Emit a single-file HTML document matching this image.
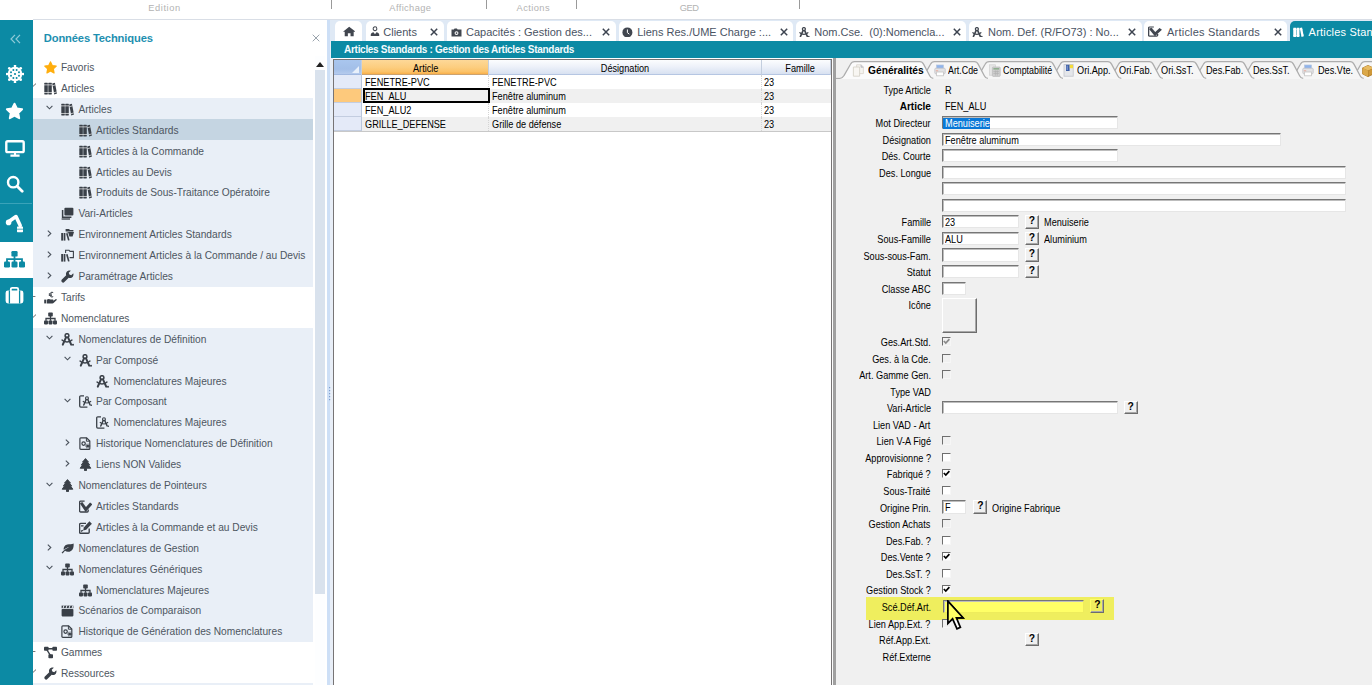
<!DOCTYPE html>
<html lang="fr"><head><meta charset="utf-8"><title>Articles Standards</title>
<style>
*{box-sizing:border-box;margin:0;padding:0}
html,body{width:1372px;height:685px;overflow:hidden;background:#fff}
body{position:relative;font-family:"Liberation Sans",sans-serif;font-size:10.2px;color:#434b55}
.abs{position:absolute}
.topbar{position:absolute;left:0;top:0;width:1372px;height:19px;background:#fff}
.topbar .lbl{position:absolute;top:1.7px;font-size:9.3px;color:#b3b3b3;line-height:12px;white-space:nowrap}
.topbar .sep{position:absolute;top:0;width:1px;height:9px;background:#9a9a9a}
.topline{position:absolute;left:33px;top:19px;width:1339px;height:1px;background:#d9dee6}
.strip{position:absolute;left:0;top:19.5px;width:32.6px;height:666px;background:#0c8aa4}
.strip .act{position:absolute;left:0;top:222.5px;width:33px;height:35.5px;background:#fff}
.strip .hl{position:absolute;left:0;top:183.5px;width:32.3px;height:1px;background:#3aa3b9}
.tree{position:absolute;left:32.6px;top:20px;width:294.4px;height:665px;background:#fff;overflow:hidden}
.tree h1{position:absolute;left:11.2px;top:11px;font-size:11.2px;font-weight:bold;color:#1d8fb0;line-height:14px;white-space:nowrap;letter-spacing:-0.15px}
.row{position:absolute;left:0.6px;width:280.2px;height:21.5px}
.row.c{background:#e9eff7}
.row.s{background:#c5d5e2}
.row .t{position:absolute;top:1.7px;line-height:20.9px;white-space:nowrap;color:#4d5661}
.row svg{position:absolute}
.split1{position:absolute;left:327.2px;top:20px;width:2.6px;height:665px;background:#cddff6}
.split2{position:absolute;left:329.8px;top:20px;width:3.7px;height:665px;background:#e8eef7}
.main{position:absolute;left:333px;top:20px;width:1039px;height:665px;background:#fff}
.tabbar{position:absolute;left:330.3px;top:20px;width:1042px;height:21px;background:#dfe9f5}
.tab{letter-spacing:0;position:absolute;top:1.2px;height:19.8px;background:#fff;border-radius:5px 5px 0 0;font-size:11px;color:#4a5363;line-height:19px;white-space:nowrap}
.tab.on{background:#0c8aa4;color:#fff}
.tab .tx{position:absolute;top:1.5px}
.tab .x{position:absolute;top:0.2px;font-size:11px;color:#3d4450}
.tab svg{position:absolute}
.title{position:absolute;left:331.3px;top:40.8px;width:1041px;height:17px;background:#0c8aa4;color:#f4fbfd;font-weight:bold;font-size:10px;letter-spacing:-0.3px;line-height:18px;padding-left:12.8px;white-space:nowrap}
.ms{letter-spacing:0;font-size:10.6px;color:#000;white-space:nowrap;line-height:13px}
.sx{display:inline-block;transform:scaleX(.865);transform-origin:left center;white-space:nowrap}
.sxr{display:inline-block;transform:scaleX(.865);transform-origin:right center;white-space:nowrap}
.sxc{display:inline-block;transform:scaleX(.865);transform-origin:center center;white-space:nowrap}
.grid{position:absolute;left:333px;top:59px;width:499.2px;height:627px;background:#fff;border:1px solid #777475}
.gh{position:absolute;top:0;height:15.4px;text-align:center;line-height:16px}
.gc{position:absolute;height:13.9px;line-height:13.9px;overflow:hidden}
.form{position:absolute;left:833.3px;top:58px;width:539px;height:627px;background:#f0f0f0;border-left:3px solid #a0a0a0}
.lab{position:absolute;right:441.6px;text-align:right;height:13px}
.val{position:absolute;height:13px}
.inp{position:absolute;height:13.2px;background:#fff;border-top:1px solid #767676;border-left:1px solid #767676;border-right:1px solid #e6e6e6;border-bottom:1px solid #e6e6e6;box-shadow:inset 1px 1px 0 #bdbdbd}
.inp .sx{position:absolute;left:2px;top:0px}
.qb{position:absolute;width:14px;height:13.6px;background:#f0f0f0;border-top:1px solid #fff;border-left:1px solid #fff;border-right:1.3px solid #6d6d6d;border-bottom:1.3px solid #6d6d6d;font-weight:bold;font-size:10.3px;line-height:10.8px;text-align:center;color:#000;box-shadow:inset -1px -1px 0 #a8a8a8}
.cb{position:absolute;width:9px;height:9.2px;background:#fff;border-top:1.5px solid #6e6e6e;border-left:1.5px solid #6e6e6e;border-right:1px solid #f6f6f6;border-bottom:1px solid #f6f6f6}
.cb.d{background:#f0f0f0}
.cb svg{position:absolute;left:0;top:0}
</style></head><body>

<div class="topbar">
<span class="lbl" style="left:148.3px;letter-spacing:.56px">Edition</span>
<span class="lbl" style="left:389.3px;letter-spacing:.38px">Affichage</span>
<span class="lbl" style="left:516.5px;letter-spacing:.44px">Actions</span>
<span class="lbl" style="left:679.8px;letter-spacing:-.5px">GED</span>
<span class="sep" style="left:331px"></span>
<span class="sep" style="left:486.3px"></span>
<span class="sep" style="left:576px"></span>
<span class="sep" style="left:799.2px"></span>
</div><div class="topline"></div>
<div class="strip" id="strip"><div class="act"></div><div class="hl"></div><svg style="position:absolute;left:10px;top:14px" width="11" height="10" viewBox="0 0 11 10"><path d="M5 0.8 L1 5 L5 9.2 M10 0.8 L6 5 L10 9.2" fill="none" stroke="#8fcad8" stroke-width="1.2"/></svg><svg style="position:absolute;left:5.8px;top:45.9px" width="18" height="18" viewBox="0 0 18 18"><circle cx="17.00" cy="9.00" r="1.35" fill="#fff"/><circle cx="14.66" cy="14.66" r="1.35" fill="#fff"/><circle cx="9.00" cy="17.00" r="1.35" fill="#fff"/><circle cx="3.34" cy="14.66" r="1.35" fill="#fff"/><circle cx="1.00" cy="9.00" r="1.35" fill="#fff"/><circle cx="3.34" cy="3.34" r="1.35" fill="#fff"/><circle cx="9.00" cy="1.00" r="1.35" fill="#fff"/><circle cx="14.66" cy="3.34" r="1.35" fill="#fff"/><circle cx="9" cy="9" r="7.3" fill="#fff"/><circle cx="12.97" cy="10.65" r="1.0" fill="#0c8aa4"/><circle cx="10.65" cy="12.97" r="1.0" fill="#0c8aa4"/><circle cx="7.35" cy="12.97" r="1.0" fill="#0c8aa4"/><circle cx="5.03" cy="10.65" r="1.0" fill="#0c8aa4"/><circle cx="5.03" cy="7.35" r="1.0" fill="#0c8aa4"/><circle cx="7.35" cy="5.03" r="1.0" fill="#0c8aa4"/><circle cx="10.65" cy="5.03" r="1.0" fill="#0c8aa4"/><circle cx="12.97" cy="7.35" r="1.0" fill="#0c8aa4"/><circle cx="9" cy="9" r="1.1" fill="#0c8aa4"/></svg><svg style="position:absolute;left:5.4px;top:82.6px" width="19" height="18" viewBox="0 0 13 13"><path d="M6.5 1.2 L8.2 4.7 L12 5.2 L9.2 7.9 L9.9 11.7 L6.5 9.9 L3.1 11.7 L3.8 7.9 L1 5.2 L4.8 4.7 Z" fill="#fff" stroke="#fff" stroke-width="1.4" stroke-linejoin="round"/></svg><svg style="position:absolute;left:5px;top:120px" width="20" height="17" viewBox="0 0 20 17"><rect x="1.3" y="1.3" width="17.4" height="10.8" rx="1.4" fill="none" stroke="#fff" stroke-width="2.4"/><path d="M10 12 V15 M5.4 15.6 H14.6" stroke="#fff" stroke-width="2.1"/></svg><svg style="position:absolute;left:5.6px;top:155.6px" width="18" height="18" viewBox="0 0 18 18"><circle cx="7.2" cy="7.2" r="5.2" fill="none" stroke="#fff" stroke-width="2.4"/><path d="M11.2 11.2 L16.2 16.2" stroke="#fff" stroke-width="2.8" stroke-linecap="round"/></svg><svg style="position:absolute;left:5.2px;top:194.4px" width="19" height="19" viewBox="0 0 19 19"><circle cx="3.6" cy="8.4" r="2.8" fill="#fff"/><path d="M4.6 7 L11 2.6 L15.2 11.6" fill="none" stroke="#fff" stroke-width="3.6" stroke-linejoin="round" stroke-linecap="round"/><rect x="12" y="12.6" width="6" height="5.6" rx=".6" fill="#fff"/><path d="M12 15.2 H18" stroke="#0c8aa4" stroke-width=".7"/></svg><svg style="position:absolute;left:4.3px;top:231.6px" width="21" height="16.5" viewBox="0 0 21 16.5"><g fill="#0c8aa4"><rect x="7.4" y="0" width="6.2" height="5.6" rx="1.2"/><rect x="0" y="10.6" width="6" height="5.9" rx="1.2"/><rect x="7.5" y="10.6" width="6" height="5.9" rx="1.2"/><rect x="15" y="10.6" width="6" height="5.9" rx="1.2"/></g><path d="M10.5 5 V11 M3 11 V8.2 H18 V11" fill="none" stroke="#0c8aa4" stroke-width="1.8"/></svg><svg style="position:absolute;left:5.3px;top:267.2px" width="19" height="17" viewBox="0 0 19 17"><rect x="0.6" y="3.6" width="17.8" height="12.8" rx="2.4" fill="#fff"/><path d="M5.8 4 V2.2 C5.8 1.4 6.4 0.9 7.2 0.9 H11.8 C12.6 0.9 13.2 1.4 13.2 2.2 V4" fill="none" stroke="#fff" stroke-width="1.8"/><path d="M4.4 3.6 V16.4 M14.6 3.6 V16.4" stroke="#0c8aa4" stroke-width="1.3"/></svg></div>
<div class="tree"><h1>Données Techniques</h1><svg class="abs" style="left:279.5px;top:14px" width="8" height="8" viewBox="0 0 8 8"><path d="M0.7 0.7 L7.3 7.3 M7.3 0.7 L0.7 7.3" stroke="#9aa3ad" stroke-width="1" fill="none"/></svg><svg class="abs" style="left:0px;top:63px" width="4" height="4" viewBox="0 0 4 4"><path d="M0 3.4 L3 0.6" stroke="#555" stroke-width=".9"/></svg><svg class="abs" style="left:0px;top:294px" width="4" height="4" viewBox="0 0 4 4"><path d="M0 3.4 L3 0.6" stroke="#555" stroke-width=".9"/></svg><svg class="abs" style="left:0px;top:649px" width="4" height="4" viewBox="0 0 4 4"><path d="M0 3.4 L3 0.6" stroke="#555" stroke-width=".9"/></svg><svg class="abs" style="left:0px;top:274.6px" width="3" height="3" viewBox="0 0 3 3"><path d="M0 1.5 H2.4" stroke="#666" stroke-width=".9"/></svg><svg class="abs" style="left:0px;top:630px" width="3" height="3" viewBox="0 0 3 3"><path d="M0 1.5 H2.4" stroke="#666" stroke-width=".9"/></svg>
<div class="row " style="top:36.40px">
<svg style="left:10.4px;top:4.7px" width="13" height="13" viewBox="0 0 13 13"><path d="M6.5 0.9 L8.2 4.6 L12.2 5.1 L9.3 7.9 L10 11.9 L6.5 10 L3 11.9 L3.7 7.9 L0.8 5.1 L4.8 4.6 Z" fill="#ffae0e" stroke="#ffae0e" stroke-width="1.3" stroke-linejoin="round"/></svg>
<span class="t" style="left:27.7px">Favoris</span>
</div>
<div class="row " style="top:57.30px">
<svg style="left:10.4px;top:4.7px" width="13" height="13" viewBox="0 0 13 13"><g fill="#3a4048"><rect x="0.3" y="0.8" width="3.5" height="11.6" rx=".4"/><rect x="4.3" y="0.8" width="3.5" height="11.6" rx=".4"/><path d="M8.2 1.4 L10.9 0.7 L13 11.6 L10.3 12.4 Z"/></g><g fill="#fff" opacity=".8"><rect x="0" y="2.5" width="8" height=".8"/><rect x="0" y="10" width="8" height=".8"/><path d="M8.3 3.3 L11.3 2.5 L11.5 3.3 L8.5 4.1 Z M9.8 10.2 L12.8 9.4 L13 10.2 L10 11 Z"/></g></svg>
<span class="t" style="left:27.7px">Articles</span>
</div>
<div class="row c" style="top:78.20px">
<svg style="left:13.1px;top:7.3px" width="7" height="5" viewBox="0 0 7 5"><path d="M0.6 0.8 L3.5 3.8 L6.4 0.8" fill="none" stroke="#4a525c" stroke-width="1.1"/></svg>
<svg style="left:27.9px;top:4.7px" width="13" height="13" viewBox="0 0 13 13"><g fill="#3a4048"><rect x="0.3" y="0.8" width="3.5" height="11.6" rx=".4"/><rect x="4.3" y="0.8" width="3.5" height="11.6" rx=".4"/><path d="M8.2 1.4 L10.9 0.7 L13 11.6 L10.3 12.4 Z"/></g><g fill="#fff" opacity=".8"><rect x="0" y="2.5" width="8" height=".8"/><rect x="0" y="10" width="8" height=".8"/><path d="M8.3 3.3 L11.3 2.5 L11.5 3.3 L8.5 4.1 Z M9.8 10.2 L12.8 9.4 L13 10.2 L10 11 Z"/></g></svg>
<span class="t" style="left:45.2px">Articles</span>
</div>
<div class="row s" style="top:99.10px">
<svg style="left:45.4px;top:4.7px" width="13" height="13" viewBox="0 0 13 13"><g fill="#3a4048"><rect x="0.3" y="0.8" width="3.5" height="11.6" rx=".4"/><rect x="4.3" y="0.8" width="3.5" height="11.6" rx=".4"/><path d="M8.2 1.4 L10.9 0.7 L13 11.6 L10.3 12.4 Z"/></g><g fill="#fff" opacity=".8"><rect x="0" y="2.5" width="8" height=".8"/><rect x="0" y="10" width="8" height=".8"/><path d="M8.3 3.3 L11.3 2.5 L11.5 3.3 L8.5 4.1 Z M9.8 10.2 L12.8 9.4 L13 10.2 L10 11 Z"/></g></svg>
<span class="t" style="left:62.7px">Articles Standards</span>
</div>
<div class="row c" style="top:120.00px">
<svg style="left:45.4px;top:4.7px" width="13" height="13" viewBox="0 0 13 13"><g fill="#3a4048"><rect x="0.3" y="0.8" width="3.5" height="11.6" rx=".4"/><rect x="4.3" y="0.8" width="3.5" height="11.6" rx=".4"/><path d="M8.2 1.4 L10.9 0.7 L13 11.6 L10.3 12.4 Z"/></g><g fill="#fff" opacity=".8"><rect x="0" y="2.5" width="8" height=".8"/><rect x="0" y="10" width="8" height=".8"/><path d="M8.3 3.3 L11.3 2.5 L11.5 3.3 L8.5 4.1 Z M9.8 10.2 L12.8 9.4 L13 10.2 L10 11 Z"/></g></svg>
<span class="t" style="left:62.7px">Articles à la Commande</span>
</div>
<div class="row c" style="top:140.90px">
<svg style="left:45.4px;top:4.7px" width="13" height="13" viewBox="0 0 13 13"><g fill="#3a4048"><rect x="0.3" y="0.8" width="3.5" height="11.6" rx=".4"/><rect x="4.3" y="0.8" width="3.5" height="11.6" rx=".4"/><path d="M8.2 1.4 L10.9 0.7 L13 11.6 L10.3 12.4 Z"/></g><g fill="#fff" opacity=".8"><rect x="0" y="2.5" width="8" height=".8"/><rect x="0" y="10" width="8" height=".8"/><path d="M8.3 3.3 L11.3 2.5 L11.5 3.3 L8.5 4.1 Z M9.8 10.2 L12.8 9.4 L13 10.2 L10 11 Z"/></g></svg>
<span class="t" style="left:62.7px">Articles au Devis</span>
</div>
<div class="row c" style="top:161.80px">
<svg style="left:45.4px;top:4.7px" width="13" height="13" viewBox="0 0 13 13"><g fill="#3a4048"><rect x="0.3" y="0.8" width="3.5" height="11.6" rx=".4"/><rect x="4.3" y="0.8" width="3.5" height="11.6" rx=".4"/><path d="M8.2 1.4 L10.9 0.7 L13 11.6 L10.3 12.4 Z"/></g><g fill="#fff" opacity=".8"><rect x="0" y="2.5" width="8" height=".8"/><rect x="0" y="10" width="8" height=".8"/><path d="M8.3 3.3 L11.3 2.5 L11.5 3.3 L8.5 4.1 Z M9.8 10.2 L12.8 9.4 L13 10.2 L10 11 Z"/></g></svg>
<span class="t" style="left:62.7px">Produits de Sous-Traitance Opératoire</span>
</div>
<div class="row c" style="top:182.70px">
<svg style="left:27.9px;top:4.7px" width="13" height="13" viewBox="0 0 13 13"><rect x="3.4" y="0.8" width="9" height="7.6" rx="1" fill="#3a4048"/><path d="M1.6 3 V10.2 H10.4" fill="none" stroke="#3a4048" stroke-width="1.5"/><path d="M0.6 12 H9" fill="none" stroke="#3a4048" stroke-width="1.3"/></svg>
<span class="t" style="left:45.2px">Vari-Articles</span>
</div>
<div class="row c" style="top:203.60px">
<svg style="left:14.1px;top:6.6px" width="5" height="7" viewBox="0 0 5 7"><path d="M0.8 0.6 L3.8 3.5 L0.8 6.4" fill="none" stroke="#4a525c" stroke-width="1.1"/></svg>
<svg style="left:27.9px;top:4.7px" width="13" height="13" viewBox="0 0 13 13"><g fill="#3a4048"><rect x="0.2" y="5" width="1.8" height="7.6"/><rect x="2.6" y="5" width="1.8" height="7.6"/><path d="M5 5.4 L6.6 5 L8.6 12.2 L7 12.6 Z"/><path d="M4.6 1 H8 L9 2 H12.4 V3.4 H4.6 Z"/><path d="M5.6 4 H13 L11.6 8.6 H8.4 L7.2 4.6 H5.6 Z"/></g></svg>
<span class="t" style="left:45.2px">Environnement Articles Standards</span>
</div>
<div class="row c" style="top:224.50px">
<svg style="left:14.1px;top:6.6px" width="5" height="7" viewBox="0 0 5 7"><path d="M0.8 0.6 L3.8 3.5 L0.8 6.4" fill="none" stroke="#4a525c" stroke-width="1.1"/></svg>
<svg style="left:27.9px;top:4.7px" width="13" height="13" viewBox="0 0 13 13"><g fill="#3a4048"><rect x="0.2" y="5" width="1.8" height="7.6"/><rect x="2.6" y="5" width="1.8" height="7.6"/><path d="M5 5.4 L6.6 5 L8.6 12.2 L7 12.6 Z"/></g><path d="M4.6 4 V1.2 H8 L9 2.4 H12.4 V8.6 H8.6" fill="none" stroke="#3a4048" stroke-width="1.1"/></svg>
<span class="t" style="left:45.2px">Environnement Articles à la Commande / au Devis</span>
</div>
<div class="row c" style="top:245.40px">
<svg style="left:14.1px;top:6.6px" width="5" height="7" viewBox="0 0 5 7"><path d="M0.8 0.6 L3.8 3.5 L0.8 6.4" fill="none" stroke="#4a525c" stroke-width="1.1"/></svg>
<svg style="left:27.9px;top:4.7px" width="13" height="13" viewBox="0 0 13 13"><path d="M12.3 3.2 L10.2 5.3 L8.4 4.6 L7.7 2.8 L9.8 0.7 C8.2 0.2 6.5 0.7 5.6 2 C4.9 3 4.8 4.2 5.2 5.3 L0.9 9.6 C0.2 10.3 0.2 11.4 0.9 12.1 C1.6 12.8 2.7 12.8 3.4 12.1 L7.7 7.8 C8.8 8.2 10 8.1 11 7.4 C12.3 6.5 12.8 4.8 12.3 3.2 Z" fill="#3a4048"/></svg>
<span class="t" style="left:45.2px">Paramétrage Articles</span>
</div>
<div class="row " style="top:266.30px">
<svg style="left:10.4px;top:4.7px" width="13" height="13" viewBox="0 0 13 13"><path d="M0.2 8.6 H2.2 V12.4 H0.2 Z" fill="#3a4048"/><path d="M2.8 8.8 C4 7.8 5.4 7.8 6.6 8.6 H8.8 C9.6 8.6 9.6 9.8 8.8 9.8 H6.4 H9.4 L11.6 8.2 C12.4 7.7 13.2 8.6 12.5 9.3 L9.8 11.8 C9.4 12.2 9 12.4 8.4 12.4 H2.8 Z" fill="#3a4048"/><path d="M9.2 1.6 C7.6 0.6 5.8 1.6 5.8 3.6 C5.8 5.6 7.6 6.6 9.2 5.6 M4.8 3 H8 M4.8 4.3 H8" fill="none" stroke="#3a4048" stroke-width="1"/></svg>
<span class="t" style="left:27.7px">Tarifs</span>
</div>
<div class="row " style="top:287.20px">
<svg style="left:10.4px;top:4.7px" width="13" height="13" viewBox="0 0 13 13"><g fill="#3a4048"><rect x="4.2" y="0.6" width="4.6" height="4" rx=".8"/><rect x="0" y="8.4" width="4" height="4" rx=".8"/><rect x="4.5" y="8.4" width="4" height="4" rx=".8"/><rect x="9" y="8.4" width="4" height="4" rx=".8"/></g><path d="M6.5 4 V8.8 M2 8.8 V6.5 H11 V8.8" fill="none" stroke="#3a4048" stroke-width="1.3"/></svg>
<span class="t" style="left:27.7px">Nomenclatures</span>
</div>
<div class="row c" style="top:308.10px">
<svg style="left:13.1px;top:7.3px" width="7" height="5" viewBox="0 0 7 5"><path d="M0.6 0.8 L3.5 3.8 L6.4 0.8" fill="none" stroke="#4a525c" stroke-width="1.1"/></svg>
<svg style="left:27.9px;top:4.7px" width="13" height="13" viewBox="0 0 13 13"><circle cx="6" cy="2.6" r="1.9" fill="none" stroke="#3a4048" stroke-width="1.5"/><path d="M5 4.4 L1.8 11.6 M7 4.4 L10.2 11.6" fill="none" stroke="#3a4048" stroke-width="2" stroke-linecap="round"/><path d="M0.6 6.6 C3.2 9.8 8.8 9.8 11.4 6.6" fill="none" stroke="#3a4048" stroke-width="1.5"/><circle cx="12" cy="11.8" r="1" fill="#3a4048"/></svg>
<span class="t" style="left:45.2px">Nomenclatures de Définition</span>
</div>
<div class="row c" style="top:329.00px">
<svg style="left:30.6px;top:7.3px" width="7" height="5" viewBox="0 0 7 5"><path d="M0.6 0.8 L3.5 3.8 L6.4 0.8" fill="none" stroke="#4a525c" stroke-width="1.1"/></svg>
<svg style="left:45.4px;top:4.7px" width="13" height="13" viewBox="0 0 13 13"><circle cx="6" cy="2.6" r="1.9" fill="none" stroke="#3a4048" stroke-width="1.5"/><path d="M5 4.4 L1.8 11.6 M7 4.4 L10.2 11.6" fill="none" stroke="#3a4048" stroke-width="2" stroke-linecap="round"/><path d="M0.6 6.6 C3.2 9.8 8.8 9.8 11.4 6.6" fill="none" stroke="#3a4048" stroke-width="1.5"/><circle cx="12" cy="11.8" r="1" fill="#3a4048"/></svg>
<span class="t" style="left:62.7px">Par Composé</span>
</div>
<div class="row c" style="top:349.90px">
<svg style="left:62.9px;top:4.7px" width="13" height="13" viewBox="0 0 13 13"><circle cx="6" cy="2.6" r="1.9" fill="none" stroke="#3a4048" stroke-width="1.5"/><path d="M5 4.4 L1.8 11.6 M7 4.4 L10.2 11.6" fill="none" stroke="#3a4048" stroke-width="2" stroke-linecap="round"/><path d="M0.6 6.6 C3.2 9.8 8.8 9.8 11.4 6.6" fill="none" stroke="#3a4048" stroke-width="1.5"/><circle cx="12" cy="11.8" r="1" fill="#3a4048"/></svg>
<span class="t" style="left:80.2px">Nomenclatures Majeures</span>
</div>
<div class="row c" style="top:370.80px">
<svg style="left:30.6px;top:7.3px" width="7" height="5" viewBox="0 0 7 5"><path d="M0.6 0.8 L3.5 3.8 L6.4 0.8" fill="none" stroke="#4a525c" stroke-width="1.1"/></svg>
<svg style="left:45.4px;top:4.7px" width="13" height="13" viewBox="0 0 13 13"><path d="M5 0.8 H1.8 C1.1 0.8 0.7 1.2 0.7 1.9 V11 C0.7 11.7 1.1 12.1 1.8 12.1 H8.4" fill="none" stroke="#3a4048" stroke-width="1.3"/><g transform="translate(3.4,1.2) scale(.76)"><circle cx="6" cy="2.6" r="1.9" fill="none" stroke="#3a4048" stroke-width="1.5"/><path d="M5 4.4 L1.8 11.6 M7 4.4 L10.2 11.6" fill="none" stroke="#3a4048" stroke-width="2" stroke-linecap="round"/><path d="M0.6 6.6 C3.2 9.8 8.8 9.8 11.4 6.6" fill="none" stroke="#3a4048" stroke-width="1.5"/><circle cx="12" cy="11.8" r="1" fill="#3a4048"/></g></svg>
<span class="t" style="left:62.7px">Par Composant</span>
</div>
<div class="row c" style="top:391.70px">
<svg style="left:62.9px;top:4.7px" width="13" height="13" viewBox="0 0 13 13"><path d="M5 0.8 H1.8 C1.1 0.8 0.7 1.2 0.7 1.9 V11 C0.7 11.7 1.1 12.1 1.8 12.1 H8.4" fill="none" stroke="#3a4048" stroke-width="1.3"/><g transform="translate(3.4,1.2) scale(.76)"><circle cx="6" cy="2.6" r="1.9" fill="none" stroke="#3a4048" stroke-width="1.5"/><path d="M5 4.4 L1.8 11.6 M7 4.4 L10.2 11.6" fill="none" stroke="#3a4048" stroke-width="2" stroke-linecap="round"/><path d="M0.6 6.6 C3.2 9.8 8.8 9.8 11.4 6.6" fill="none" stroke="#3a4048" stroke-width="1.5"/><circle cx="12" cy="11.8" r="1" fill="#3a4048"/></g></svg>
<span class="t" style="left:80.2px">Nomenclatures Majeures</span>
</div>
<div class="row c" style="top:412.60px">
<svg style="left:31.6px;top:6.6px" width="5" height="7" viewBox="0 0 5 7"><path d="M0.8 0.6 L3.8 3.5 L0.8 6.4" fill="none" stroke="#4a525c" stroke-width="1.1"/></svg>
<svg style="left:45.4px;top:4.7px" width="13" height="13" viewBox="0 0 13 13"><path d="M1.8 0.8 H7.6 L10.8 4 V11.4 C10.8 11.9 10.4 12.3 9.9 12.3 H1.8 C1.3 12.3 0.9 11.9 0.9 11.4 V1.7 C0.9 1.2 1.3 0.8 1.8 0.8 Z" fill="none" stroke="#3a4048" stroke-width="1.2"/><path d="M7.4 0.8 V4.2 H10.8" fill="none" stroke="#3a4048" stroke-width="1"/><circle cx="4.6" cy="6.6" r="1.7" fill="none" stroke="#3a4048" stroke-width="1.2"/><circle cx="8.6" cy="9" r="1.5" fill="#3a4048"/><circle cx="8.6" cy="9" r="2.1" fill="none" stroke="#3a4048" stroke-width=".8" stroke-dasharray="1 .8"/></svg>
<span class="t" style="left:62.7px">Historique Nomenclatures de Définition</span>
</div>
<div class="row c" style="top:433.50px">
<svg style="left:31.6px;top:6.6px" width="5" height="7" viewBox="0 0 5 7"><path d="M0.8 0.6 L3.8 3.5 L0.8 6.4" fill="none" stroke="#4a525c" stroke-width="1.1"/></svg>
<svg style="left:45.4px;top:4.7px" width="13" height="13" viewBox="0 0 13 13"><path d="M6.5 0.6 L9.4 4 H8.4 L10.6 6.8 H9.4 L11.8 10.2 H7.5 V12.6 H5.5 V10.2 H1.2 L3.6 6.8 H2.4 L4.6 4 H3.6 Z" fill="#3a4048" stroke="#3a4048" stroke-width="1" stroke-linejoin="round"/></svg>
<span class="t" style="left:62.7px">Liens NON Valides</span>
</div>
<div class="row c" style="top:454.40px">
<svg style="left:13.1px;top:7.3px" width="7" height="5" viewBox="0 0 7 5"><path d="M0.6 0.8 L3.5 3.8 L6.4 0.8" fill="none" stroke="#4a525c" stroke-width="1.1"/></svg>
<svg style="left:27.9px;top:4.7px" width="13" height="13" viewBox="0 0 13 13"><path d="M6.5 0.6 L9.4 4 H8.4 L10.6 6.8 H9.4 L11.8 10.2 H7.5 V12.6 H5.5 V10.2 H1.2 L3.6 6.8 H2.4 L4.6 4 H3.6 Z" fill="#3a4048" stroke="#3a4048" stroke-width="1" stroke-linejoin="round"/></svg>
<span class="t" style="left:45.2px">Nomenclatures de Pointeurs</span>
</div>
<div class="row c" style="top:475.30px">
<svg style="left:45.4px;top:4.7px" width="13" height="13" viewBox="0 0 13 13"><path d="M5.6 1.2 H1.6 C1 1.2 0.6 1.6 0.6 2.2 V11 C0.6 11.6 1 12 1.6 12 H8.2 C8.8 12 9.2 11.6 9.2 11 V9.4" fill="none" stroke="#3a4048" stroke-width="1.3"/><path d="M2.2 2.6 L6.8 9.6 L12.2 3.4" fill="none" stroke="#3a4048" stroke-width="3" stroke-linejoin="miter"/><path d="M3.4 2.2 L6.2 5.6" fill="none" stroke="#fff" stroke-width=".7" opacity=".55"/></svg>
<span class="t" style="left:62.7px">Articles Standards</span>
</div>
<div class="row c" style="top:496.20px">
<svg style="left:45.4px;top:4.7px" width="13" height="13" viewBox="0 0 13 13"><path d="M7 2.4 H1.6 C1 2.4 0.6 2.8 0.6 3.4 V11.2 C0.6 11.8 1 12.2 1.6 12.2 H9.2 C9.8 12.2 10.2 11.8 10.2 11.2 V7.6" fill="none" stroke="#3a4048" stroke-width="1.4"/><path d="M10.4 0.2 L12.9 2.7 L7.2 8.8 L4.2 9.4 L4.8 6.4 Z" fill="#3a4048"/><path d="M2 4.8 H4.6 M2 10.4 L3.8 9.2" stroke="#3a4048" stroke-width="1.3"/></svg>
<span class="t" style="left:62.7px">Articles à la Commande et au Devis</span>
</div>
<div class="row c" style="top:517.10px">
<svg style="left:14.1px;top:6.6px" width="5" height="7" viewBox="0 0 5 7"><path d="M0.8 0.6 L3.8 3.5 L0.8 6.4" fill="none" stroke="#4a525c" stroke-width="1.1"/></svg>
<svg style="left:27.9px;top:4.7px" width="13" height="13" viewBox="0 0 13 13"><path d="M12.6 1.4 C13 5.6 11.6 9.6 7 9.8 C5.8 9.8 4.8 9.4 4 8.8 L1.6 11.6 L0.6 10.8 C2.6 8 5 6.2 8.4 5.2 C5.8 5.4 4 6.6 2.8 8 C2.2 5.6 3.4 3 6.2 2.4 C8.6 1.9 10.8 2.6 12.6 1.4 Z" fill="#3a4048"/></svg>
<span class="t" style="left:45.2px">Nomenclatures de Gestion</span>
</div>
<div class="row c" style="top:538.00px">
<svg style="left:13.1px;top:7.3px" width="7" height="5" viewBox="0 0 7 5"><path d="M0.6 0.8 L3.5 3.8 L6.4 0.8" fill="none" stroke="#4a525c" stroke-width="1.1"/></svg>
<svg style="left:27.9px;top:4.7px" width="13" height="13" viewBox="0 0 13 13"><g fill="#3a4048"><rect x="4.2" y="0.6" width="4.6" height="4" rx=".8"/><rect x="0" y="8.4" width="4" height="4" rx=".8"/><rect x="4.5" y="8.4" width="4" height="4" rx=".8"/><rect x="9" y="8.4" width="4" height="4" rx=".8"/></g><path d="M6.5 4 V8.8 M2 8.8 V6.5 H11 V8.8" fill="none" stroke="#3a4048" stroke-width="1.3"/></svg>
<span class="t" style="left:45.2px">Nomenclatures Génériques</span>
</div>
<div class="row c" style="top:558.90px">
<svg style="left:45.4px;top:4.7px" width="13" height="13" viewBox="0 0 13 13"><g fill="#3a4048"><rect x="4.2" y="0.6" width="4.6" height="4" rx=".8"/><rect x="0" y="8.4" width="4" height="4" rx=".8"/><rect x="4.5" y="8.4" width="4" height="4" rx=".8"/><rect x="9" y="8.4" width="4" height="4" rx=".8"/></g><path d="M6.5 4 V8.8 M2 8.8 V6.5 H11 V8.8" fill="none" stroke="#3a4048" stroke-width="1.3"/></svg>
<span class="t" style="left:62.7px">Nomenclatures Majeures</span>
</div>
<div class="row c" style="top:579.80px">
<svg style="left:27.9px;top:4.7px" width="13" height="13" viewBox="0 0 13 13"><rect x="0.6" y="5" width="11.8" height="7.4" rx=".8" fill="#3a4048"/><path d="M0.6 1.6 H12.4 V4.2 H0.6 Z" fill="#3a4048"/><path d="M3 1.4 L2 4.4 M6 1.4 L5 4.4 M9 1.4 L8 4.4 M12 1.4 L11 4.4" stroke="#e9eff7" stroke-width="1"/></svg>
<span class="t" style="left:45.2px">Scénarios de Comparaison</span>
</div>
<div class="row c" style="top:600.70px">
<svg style="left:27.9px;top:4.7px" width="13" height="13" viewBox="0 0 13 13"><path d="M1.8 0.8 H7.6 L10.8 4 V11.4 C10.8 11.9 10.4 12.3 9.9 12.3 H1.8 C1.3 12.3 0.9 11.9 0.9 11.4 V1.7 C0.9 1.2 1.3 0.8 1.8 0.8 Z" fill="none" stroke="#3a4048" stroke-width="1.2"/><path d="M7.4 0.8 V4.2 H10.8" fill="none" stroke="#3a4048" stroke-width="1"/><circle cx="4.6" cy="6.6" r="1.7" fill="none" stroke="#3a4048" stroke-width="1.2"/><circle cx="8.6" cy="9" r="1.5" fill="#3a4048"/><circle cx="8.6" cy="9" r="2.1" fill="none" stroke="#3a4048" stroke-width=".8" stroke-dasharray="1 .8"/></svg>
<span class="t" style="left:45.2px">Historique de Génération des Nomenclatures</span>
</div>
<div class="row " style="top:621.60px">
<svg style="left:10.4px;top:4.7px" width="13" height="13" viewBox="0 0 13 13"><g fill="#3a4048"><rect x="0" y="0.8" width="4.6" height="4" rx=".8"/><rect x="8.4" y="0.8" width="4.6" height="4" rx=".8"/><rect x="4.4" y="8.2" width="4.6" height="4" rx=".8"/></g><path d="M4 2.8 H9 M3 4 L6.4 9.4" fill="none" stroke="#3a4048" stroke-width="1.4"/></svg>
<span class="t" style="left:27.7px">Gammes</span>
</div>
<div class="row " style="top:642.50px">
<svg style="left:10.4px;top:4.7px" width="13" height="13" viewBox="0 0 13 13"><path d="M12.3 3.2 L10.2 5.3 L8.4 4.6 L7.7 2.8 L9.8 0.7 C8.2 0.2 6.5 0.7 5.6 2 C4.9 3 4.8 4.2 5.2 5.3 L0.9 9.6 C0.2 10.3 0.2 11.4 0.9 12.1 C1.6 12.8 2.7 12.8 3.4 12.1 L7.7 7.8 C8.8 8.2 10 8.1 11 7.4 C12.3 6.5 12.8 4.8 12.3 3.2 Z" fill="#3a4048"/></svg>
<span class="t" style="left:27.7px">Ressources</span>
</div>
<div class="row c" style="top:663.40px">
</div>
<div class="abs" style="left:282.6px;top:36px;width:9.4px;height:650px;background:#fdfeff"></div>
<div class="abs" style="left:282.6px;top:50px;width:9.4px;height:524px;background:#d9e2ed"></div>
<svg class="abs" style="left:283.3px;top:41.5px" width="8" height="5" viewBox="0 0 8 5"><path d="M0 5 L4 0 L8 5 Z" fill="#222"/></svg>
</div>
<div class="split1"></div><div class="split2"></div>
<svg class="abs" style="left:328.6px;top:387px" width="2" height="16" viewBox="0 0 2 16"><g fill="#7f9fd0"><rect y="0" width="1.2" height="1.2"/><rect y="3" width="1.2" height="1.2"/><rect y="6" width="1.2" height="1.2"/><rect y="9" width="1.2" height="1.2"/><rect y="12" width="1.2" height="1.2"/></g></svg>
<div class="tabbar">
<div class="tab" style="left:4.9px;width:26.4px">
<svg style="left:7.5px;top:4.6px" width="12.4" height="11.2" viewBox="0 0 13 13" preserveAspectRatio="none"><path d="M6.5 0.8 L13 6.6 H11.2 V12 H7.9 V8.4 H5.1 V12 H1.8 V6.6 H0 Z" fill="#41464f"/></svg>
</div>
<div class="tab" style="left:36.2px;width:77.5px">
<svg style="left:3.3px;top:5.2px" width="10" height="10.6" viewBox="0 0 13 13" preserveAspectRatio="none"><circle cx="6.5" cy="3.4" r="2.4" fill="none" stroke="#41464f" stroke-width="1.3"/><path d="M1 12.4 V10.6 C1 9 3 8 4.6 7.8 L6.5 10 L8.4 7.8 C10 8 12 9 12 10.6 V12.4 Z" fill="#41464f"/></svg>
<span class="tx" style="left:16.8px;white-space:pre;letter-spacing:0px">Clients</span>
<svg style="left:63.9px;top:6.6px" width="8" height="8" viewBox="0 0 8 8"><path d="M0.8 0.8 L7.2 7.2 M7.2 0.8 L0.8 7.2" stroke="#3d4450" stroke-width="1.5" fill="none"/></svg>
</div>
<div class="tab" style="left:116.7px;width:168.7px">
<svg style="left:3.6px;top:5.6px" width="11" height="10.6" viewBox="0 0 13 13" preserveAspectRatio="none"><path d="M0.6 3 H3.4 L4.2 1.8 H7 L7.8 3 H12.4 V11.8 H0.6 Z" fill="#41464f"/><circle cx="6.5" cy="7.4" r="2.3" fill="#fff"/><circle cx="6.5" cy="7.4" r="1.1" fill="#41464f"/></svg>
<span class="tx" style="left:19.0px;white-space:pre;letter-spacing:0px">Capacités : Gestion des...</span>
<svg style="left:155.1px;top:6.6px" width="8" height="8" viewBox="0 0 8 8"><path d="M0.8 0.8 L7.2 7.2 M7.2 0.8 L0.8 7.2" stroke="#3d4450" stroke-width="1.5" fill="none"/></svg>
</div>
<div class="tab" style="left:288.3px;width:174.9px">
<svg style="left:3.3px;top:5.4px" width="10.8" height="10.8" viewBox="0 0 13 13" preserveAspectRatio="none"><circle cx="6.5" cy="6.5" r="6" fill="#41464f"/><path d="M6.5 3 V6.8 L8.8 8.6" fill="none" stroke="#fff" stroke-width="1.2"/></svg>
<span class="tx" style="left:18.6px;white-space:pre;letter-spacing:0px">Liens Res./UME Charge :...</span>
<svg style="left:161.3px;top:6.6px" width="8" height="8" viewBox="0 0 8 8"><path d="M0.8 0.8 L7.2 7.2 M7.2 0.8 L0.8 7.2" stroke="#3d4450" stroke-width="1.5" fill="none"/></svg>
</div>
<div class="tab" style="left:465.4px;width:170.8px">
<svg style="left:3.4px;top:5.4px" width="10.6" height="10.6" viewBox="0 0 13 13" preserveAspectRatio="none"><circle cx="6" cy="2.6" r="1.9" fill="none" stroke="#41464f" stroke-width="1.5"/><path d="M5 4.4 L1.8 11.6 M7 4.4 L10.2 11.6" fill="none" stroke="#41464f" stroke-width="2" stroke-linecap="round"/><path d="M0.6 6.6 C3.2 9.8 8.8 9.8 11.4 6.6" fill="none" stroke="#41464f" stroke-width="1.5"/><circle cx="12" cy="11.8" r="1" fill="#41464f"/></svg>
<span class="tx" style="left:18.6px;white-space:pre;letter-spacing:0px">Nom.Cse.  (0):Nomencla...</span>
<svg style="left:157.2px;top:6.6px" width="8" height="8" viewBox="0 0 8 8"><path d="M0.8 0.8 L7.2 7.2 M7.2 0.8 L0.8 7.2" stroke="#3d4450" stroke-width="1.5" fill="none"/></svg>
</div>
<div class="tab" style="left:638.9px;width:172.8px">
<svg style="left:3.2px;top:5.4px" width="10.6" height="10.6" viewBox="0 0 13 13" preserveAspectRatio="none"><circle cx="6" cy="2.6" r="1.9" fill="none" stroke="#41464f" stroke-width="1.5"/><path d="M5 4.4 L1.8 11.6 M7 4.4 L10.2 11.6" fill="none" stroke="#41464f" stroke-width="2" stroke-linecap="round"/><path d="M0.6 6.6 C3.2 9.8 8.8 9.8 11.4 6.6" fill="none" stroke="#41464f" stroke-width="1.5"/><circle cx="12" cy="11.8" r="1" fill="#41464f"/></svg>
<span class="tx" style="left:18.8px;white-space:pre;letter-spacing:0px">Nom. Def. (R/FO73) : No...</span>
<svg style="left:159.2px;top:6.6px" width="8" height="8" viewBox="0 0 8 8"><path d="M0.8 0.8 L7.2 7.2 M7.2 0.8 L0.8 7.2" stroke="#3d4450" stroke-width="1.5" fill="none"/></svg>
</div>
<div class="tab" style="left:813.9px;width:143.2px">
<svg style="left:3.8px;top:5.2px" width="13.6" height="11" viewBox="0 0 13 13" preserveAspectRatio="none"><path d="M5.6 1.2 H1.6 C1 1.2 0.6 1.6 0.6 2.2 V11 C0.6 11.6 1 12 1.6 12 H8.2 C8.8 12 9.2 11.6 9.2 11 V9.4" fill="none" stroke="#41464f" stroke-width="1.3"/><path d="M2.2 2.6 L6.8 9.6 L12.2 3.4" fill="none" stroke="#41464f" stroke-width="3" stroke-linejoin="miter"/><path d="M3.4 2.2 L6.2 5.6" fill="none" stroke="#fff" stroke-width=".7" opacity=".55"/></svg>
<span class="tx" style="left:22.9px;white-space:pre;letter-spacing:0.2px">Articles Standards</span>
<svg style="left:129.6px;top:6.6px" width="8" height="8" viewBox="0 0 8 8"><path d="M0.8 0.8 L7.2 7.2 M7.2 0.8 L0.8 7.2" stroke="#3d4450" stroke-width="1.5" fill="none"/></svg>
</div>
<div class="tab on" style="left:959.3px;width:90.4px">
<svg style="left:3.6px;top:5.4px" width="10.8" height="10.4" viewBox="0 0 13 13" preserveAspectRatio="none"><g fill="#fff"><rect x="0.3" y="0.8" width="3.5" height="11.6" rx=".4"/><rect x="4.3" y="0.8" width="3.5" height="11.6" rx=".4"/><path d="M8.2 1.4 L10.9 0.7 L13 11.6 L10.3 12.4 Z"/></g><g fill="#fff" opacity=".8"><rect x="0" y="2.5" width="8" height=".8"/><rect x="0" y="10" width="8" height=".8"/><path d="M8.3 3.3 L11.3 2.5 L11.5 3.3 L8.5 4.1 Z M9.8 10.2 L12.8 9.4 L13 10.2 L10 11 Z"/></g></svg>
<span class="tx" style="left:19.0px;white-space:pre;letter-spacing:0.2px">Articles Standards</span>
</div>
</div>
<div class="title">Articles Standards : Gestion des Articles Standards</div>
<div class="grid ms">
<div class="gh" style="left:0.0px;width:28.3px;background:linear-gradient(#a9c6ee,#a3bfe8 60%,#b9cdee);border-right:1px solid #c3cede;box-shadow:inset 0 -1px 0 rgba(120,150,200,.35)">
<svg class="abs" style="left:18px;top:5.5px" width="7" height="7" viewBox="0 0 7 7"><path d="M7 0 L7 7 L0 7 Z" fill="#e8f0fb"/></svg>
</div>
<div class="gh" style="left:28.3px;width:127.0px;background:linear-gradient(#fdd898 0%,#fccd7e 50%,#fbc268 78%,#f8a63a 100%);border-right:1px solid #c3cede;box-shadow:inset 0 -1px 0 rgba(120,150,200,.35)">
<span class="sxc" style="">Article</span>
</div>
<div class="gh" style="left:155.3px;width:272.5px;background:linear-gradient(#fcfdfe,#edf1f9 45%,#d5dff0);border-right:1px solid #c3cede;box-shadow:inset 0 -1px 0 rgba(120,150,200,.35)">
<span class="sxc" style="">Désignation</span>
</div>
<div class="gh" style="left:427.8px;width:69.5px;background:linear-gradient(#fcfdfe,#edf1f9 45%,#d5dff0);border-right:1px solid #c3cede;box-shadow:inset 0 -1px 0 rgba(120,150,200,.35)">
<span class="sxc" style="margin-left:8px">Famille</span>
</div>
<div class="gc" style="left:0;top:15.4px;width:28.3px;height:13.2px;background:#e4eaf8;border-right:1px solid #b9c6dc;border-bottom:1px solid #c3cde0"></div>
<div class="gc" style="left:28.3px;top:15.4px;width:127.0px;height:13.2px;background:#fff;border-right:1px dotted #d4d4d4;line-height:14.6px"><span class="sx" style="margin-left:2.6px">FENETRE-PVC</span></div>
<div class="gc" style="left:155.3px;top:15.4px;width:272.5px;height:13.2px;background:#fff;border-right:1px dotted #d4d4d4;line-height:14.6px"><span class="sx" style="margin-left:2.6px">FENETRE-PVC</span></div>
<div class="gc" style="left:427.8px;top:15.4px;width:69.5px;height:13.2px;background:#fff;border-right:1px dotted transparent;line-height:14.6px"><span class="sx" style="margin-left:2.6px">23</span></div>
<div class="gc" style="left:0;top:28.6px;width:28.3px;height:14.5px;background:#fdc97c;border-right:1px solid #b9c6dc;border-bottom:1px solid #c3cde0"></div>
<div class="gc" style="left:28.3px;top:28.6px;width:127.0px;height:14.5px;background:#f0f0f0;border-right:1px dotted #d4d4d4;line-height:15.9px"><span class="sx" style="margin-left:2.6px">FEN_ALU</span></div>
<div class="gc" style="left:155.3px;top:28.6px;width:272.5px;height:14.5px;background:#f0f0f0;border-right:1px dotted #d4d4d4;line-height:15.9px"><span class="sx" style="margin-left:2.6px">Fenêtre aluminum</span></div>
<div class="gc" style="left:427.8px;top:28.6px;width:69.5px;height:14.5px;background:#f0f0f0;border-right:1px dotted transparent;line-height:15.9px"><span class="sx" style="margin-left:2.6px">23</span></div>
<div class="gc" style="left:0;top:43.1px;width:28.3px;height:13.9px;background:#e4eaf8;border-right:1px solid #b9c6dc;border-bottom:1px solid #c3cde0"></div>
<div class="gc" style="left:28.3px;top:43.1px;width:127.0px;height:13.9px;background:#fff;border-right:1px dotted #d4d4d4;line-height:15.3px"><span class="sx" style="margin-left:2.6px">FEN_ALU2</span></div>
<div class="gc" style="left:155.3px;top:43.1px;width:272.5px;height:13.9px;background:#fff;border-right:1px dotted #d4d4d4;line-height:15.3px"><span class="sx" style="margin-left:2.6px">Fenêtre aluminum</span></div>
<div class="gc" style="left:427.8px;top:43.1px;width:69.5px;height:13.9px;background:#fff;border-right:1px dotted transparent;line-height:15.3px"><span class="sx" style="margin-left:2.6px">23</span></div>
<div class="gc" style="left:0;top:57.0px;width:28.3px;height:13.6px;background:#e4eaf8;border-right:1px solid #b9c6dc;border-bottom:1px solid #c3cde0"></div>
<div class="gc" style="left:28.3px;top:57.0px;width:127.0px;height:13.6px;background:#f0f0f0;border-right:1px dotted #d4d4d4;line-height:15.0px"><span class="sx" style="margin-left:2.6px">GRILLE_DEFENSE</span></div>
<div class="gc" style="left:155.3px;top:57.0px;width:272.5px;height:13.6px;background:#f0f0f0;border-right:1px dotted #d4d4d4;line-height:15.0px"><span class="sx" style="margin-left:2.6px">Grille de défense</span></div>
<div class="gc" style="left:427.8px;top:57.0px;width:69.5px;height:13.6px;background:#f0f0f0;border-right:1px dotted transparent;line-height:15.0px"><span class="sx" style="margin-left:2.6px">23</span></div>
<div class="abs" style="left:0;top:70.6px;width:497.3px;height:1px;background:#c8c8c8"></div>
<div class="abs" style="left:28.6px;top:28.2px;width:127.0px;height:15.2px;border:2px solid #000"></div>
</div>
<div class="abs" style="left:832.3px;top:58px;width:2px;height:627px;background:#fbfbfb"></div>
<div class="form ms" id="form">
<svg class="abs" style="left:0;top:0" width="536" height="22" viewBox="0 0 536 22"><path d="M0 20.400000000000006 H4.1" stroke="#a6a6a6" stroke-width="1" fill="none"/><path d="M514.5 20.400000000000006 C516.7 20.400000000000006 517.5 18.9 518.5 17.4 L524.9 6.2 C525.9 4.2 526.9 3.6 528.9 3.6 H581.2 C583.2 3.6 584.1 4.4 585.1 6.4 L591.1 17.8 C591.9 19.6 592.7 20.4 594.7 20.400000000000006 V21.000000000000007 H514.5 Z" fill="#f6f6f6" stroke="none"/><path d="M514.5 20.400000000000006 C516.7 20.400000000000006 517.5 18.9 518.5 17.4 L524.9 6.2 C525.9 4.2 526.9 3.6 528.9 3.6 H581.2 C583.2 3.6 584.1 4.4 585.1 6.4 L591.1 17.8 C591.9 19.6 592.7 20.4 594.7 20.400000000000006" fill="none" stroke="#adadad" stroke-width="1.25"/><path d="M454.0 20.400000000000006 C456.2 20.400000000000006 457.0 18.9 458.0 17.4 L464.4 6.2 C465.4 4.2 466.4 3.6 468.4 3.6 H514.2 C516.2 3.6 517.1 4.4 518.1 6.4 L524.1 17.8 C524.9 19.6 525.7 20.4 527.7 20.400000000000006 V21.000000000000007 H454.0 Z" fill="#f6f6f6" stroke="none"/><path d="M454.0 20.400000000000006 C456.2 20.400000000000006 457.0 18.9 458.0 17.4 L464.4 6.2 C465.4 4.2 466.4 3.6 468.4 3.6 H514.2 C516.2 3.6 517.1 4.4 518.1 6.4 L524.1 17.8 C524.9 19.6 525.7 20.4 527.7 20.400000000000006" fill="none" stroke="#adadad" stroke-width="1.25"/><path d="M405.1 20.400000000000006 C407.3 20.400000000000006 408.1 18.9 409.1 17.4 L415.5 6.2 C416.5 4.2 417.5 3.6 419.5 3.6 H453.7 C455.7 3.6 456.6 4.4 457.6 6.4 L463.6 17.8 C464.4 19.6 465.2 20.4 467.2 20.400000000000006 V21.000000000000007 H405.1 Z" fill="#f6f6f6" stroke="none"/><path d="M405.1 20.400000000000006 C407.3 20.400000000000006 408.1 18.9 409.1 17.4 L415.5 6.2 C416.5 4.2 417.5 3.6 419.5 3.6 H453.7 C455.7 3.6 456.6 4.4 457.6 6.4 L463.6 17.8 C464.4 19.6 465.2 20.4 467.2 20.400000000000006" fill="none" stroke="#adadad" stroke-width="1.25"/><path d="M357.0 20.400000000000006 C359.2 20.400000000000006 360.0 18.9 361.0 17.4 L367.4 6.2 C368.4 4.2 369.4 3.6 371.4 3.6 H404.8 C406.8 3.6 407.7 4.4 408.7 6.4 L414.7 17.8 C415.5 19.6 416.3 20.4 418.3 20.400000000000006 V21.000000000000007 H357.0 Z" fill="#f6f6f6" stroke="none"/><path d="M357.0 20.400000000000006 C359.2 20.400000000000006 360.0 18.9 361.0 17.4 L367.4 6.2 C368.4 4.2 369.4 3.6 371.4 3.6 H404.8 C406.8 3.6 407.7 4.4 408.7 6.4 L414.7 17.8 C415.5 19.6 416.3 20.4 418.3 20.400000000000006" fill="none" stroke="#adadad" stroke-width="1.25"/><path d="M313.6 20.400000000000006 C315.8 20.400000000000006 316.6 18.9 317.6 17.4 L324.0 6.2 C325.0 4.2 326.0 3.6 328.0 3.6 H356.7 C358.7 3.6 359.6 4.4 360.6 6.4 L366.6 17.8 C367.4 19.6 368.2 20.4 370.2 20.400000000000006 V21.000000000000007 H313.6 Z" fill="#f6f6f6" stroke="none"/><path d="M313.6 20.400000000000006 C315.8 20.400000000000006 316.6 18.9 317.6 17.4 L324.0 6.2 C325.0 4.2 326.0 3.6 328.0 3.6 H356.7 C358.7 3.6 359.6 4.4 360.6 6.4 L366.6 17.8 C367.4 19.6 368.2 20.4 370.2 20.400000000000006" fill="none" stroke="#adadad" stroke-width="1.25"/><path d="M272.1 20.400000000000006 C274.3 20.400000000000006 275.1 18.9 276.1 17.4 L282.5 6.2 C283.5 4.2 284.5 3.6 286.5 3.6 H313.3 C315.3 3.6 316.2 4.4 317.2 6.4 L323.2 17.8 C324.0 19.6 324.8 20.4 326.8 20.400000000000006 V21.000000000000007 H272.1 Z" fill="#f6f6f6" stroke="none"/><path d="M272.1 20.400000000000006 C274.3 20.400000000000006 275.1 18.9 276.1 17.4 L282.5 6.2 C283.5 4.2 284.5 3.6 286.5 3.6 H313.3 C315.3 3.6 316.2 4.4 317.2 6.4 L323.2 17.8 C324.0 19.6 324.8 20.4 326.8 20.400000000000006" fill="none" stroke="#adadad" stroke-width="1.25"/><path d="M213.8 20.400000000000006 C216.0 20.400000000000006 216.8 18.9 217.8 17.4 L224.2 6.2 C225.2 4.2 226.2 3.6 228.2 3.6 H271.8 C273.8 3.6 274.7 4.4 275.7 6.4 L281.7 17.8 C282.5 19.6 283.3 20.4 285.3 20.400000000000006 V21.000000000000007 H213.8 Z" fill="#f6f6f6" stroke="none"/><path d="M213.8 20.400000000000006 C216.0 20.400000000000006 216.8 18.9 217.8 17.4 L224.2 6.2 C225.2 4.2 226.2 3.6 228.2 3.6 H271.8 C273.8 3.6 274.7 4.4 275.7 6.4 L281.7 17.8 C282.5 19.6 283.3 20.4 285.3 20.400000000000006" fill="none" stroke="#adadad" stroke-width="1.25"/><path d="M138.7 20.400000000000006 C140.9 20.400000000000006 141.7 18.9 142.7 17.4 L149.1 6.2 C150.1 4.2 151.1 3.6 153.1 3.6 H213.5 C215.5 3.6 216.4 4.4 217.4 6.4 L223.4 17.8 C224.2 19.6 225.0 20.4 227.0 20.400000000000006 V21.000000000000007 H138.7 Z" fill="#f6f6f6" stroke="none"/><path d="M138.7 20.400000000000006 C140.9 20.400000000000006 141.7 18.9 142.7 17.4 L149.1 6.2 C150.1 4.2 151.1 3.6 153.1 3.6 H213.5 C215.5 3.6 216.4 4.4 217.4 6.4 L223.4 17.8 C224.2 19.6 225.0 20.4 227.0 20.400000000000006" fill="none" stroke="#adadad" stroke-width="1.25"/><path d="M84.1 20.400000000000006 C86.3 20.400000000000006 87.1 18.9 88.1 17.4 L94.5 6.2 C95.5 4.2 96.5 3.6 98.5 3.6 H138.4 C140.4 3.6 141.3 4.4 142.3 6.4 L148.3 17.8 C149.1 19.6 149.9 20.4 151.9 20.400000000000006 V21.000000000000007 H84.1 Z" fill="#f6f6f6" stroke="none"/><path d="M84.1 20.400000000000006 C86.3 20.400000000000006 87.1 18.9 88.1 17.4 L94.5 6.2 C95.5 4.2 96.5 3.6 98.5 3.6 H138.4 C140.4 3.6 141.3 4.4 142.3 6.4 L148.3 17.8 C149.1 19.6 149.9 20.4 151.9 20.400000000000006" fill="none" stroke="#adadad" stroke-width="1.25"/><path d="M4.1 20.400000000000006 C6.3 20.400000000000006 7.1 18.9 8.1 17.4 L14.5 6.2 C15.5 4.2 16.5 3.6 18.5 3.6 H83.8 C85.8 3.6 86.7 4.4 87.7 6.4 L93.7 17.8 C94.5 19.6 95.3 20.4 97.3 20.400000000000006 V21.000000000000007 H4.1 Z" fill="#fbfbfb" stroke="none"/><path d="M4.1 20.400000000000006 C6.3 20.400000000000006 7.1 18.9 8.1 17.4 L14.5 6.2 C15.5 4.2 16.5 3.6 18.5 3.6 H83.8 C85.8 3.6 86.7 4.4 87.7 6.4 L93.7 17.8 C94.5 19.6 95.3 20.4 97.3 20.400000000000006" fill="none" stroke="#adadad" stroke-width="1.25"/></svg><svg class="abs" style="left:16.1px;top:6.0px" width="12" height="13" viewBox="0 0 12 13"><path d="M4.6 0.8 H9.2 L11.4 3 V9.6 H4.6 Z" fill="#f6f4f0" stroke="#dcd8d0" stroke-width=".9"/><path d="M9 0.8 V3.2 H11.4" fill="#d0d0d4" stroke="#b9b9c0" stroke-width=".8"/><path d="M1.4 3 H7.6 V12.2 H1.4 Z" fill="#f8f6f2" stroke="#d6d2ca" stroke-width=".9"/></svg><div class="val" style="left:31.9px;top:6.3px"><span class="sx" style="font-weight:bold;transform:scaleX(.965)">Généralités</span></div><svg class="abs" style="left:97.7px;top:6.0px" width="12" height="13" viewBox="0 0 12 13"><rect x="2.6" y="1" width="6.8" height="4" fill="#8fb4ec" stroke="#b4c4dc" stroke-width=".7"/><rect x="0.8" y="4.2" width="10.4" height="5.6" rx="1" fill="#e2e2e4" stroke="#c2c2c6" stroke-width=".8"/><rect x="1.8" y="6.4" width="2.4" height=".9" fill="#e8a090"/><rect x="2.6" y="8" width="6.8" height="3.8" fill="#fff" stroke="#c4c4c4" stroke-width=".8"/></svg><div class="val" style="left:111.9px;top:6.3px"><span class="sx" style="transform:scaleX(.835)">Art.Cde</span></div><svg class="abs" style="left:152.5px;top:6.0px" width="12" height="13" viewBox="0 0 12 13"><rect x="0.6" y="0.8" width="6" height="10.4" fill="#e6e6e6" stroke="#d0d0d0" stroke-width=".7"/><rect x="3.4" y="3" width="7.8" height="9.4" rx=".8" fill="#cfcfcf" stroke="#bcbcbc" stroke-width=".8"/><rect x="4.4" y="4" width="5.8" height="1.6" fill="#8fae8f"/><path d="M4.4 7.4 H10.2 M4.4 9.4 H10.2 M6.4 6.4 V11.6 M8.3 6.4 V11.6" stroke="#b0b0b0" stroke-width=".7"/></svg><div class="val" style="left:166.4px;top:6.3px"><span class="sx" style="transform:scaleX(.835)">Comptabilité</span></div><svg class="abs" style="left:226.9px;top:6.0px" width="12" height="13" viewBox="0 0 12 13"><rect x="1" y="0.6" width="9.2" height="11.6" fill="#e4e6ea" stroke="#c0c4cc" stroke-width=".8"/><rect x="3" y="0.8" width="3.6" height="6.2" fill="#3e5fa6"/><rect x="3.6" y="1.6" width="1.2" height="4.4" fill="#7f9ad0"/><rect x="6.8" y="0.8" width="3.2" height="3.4" fill="#f6dc3a"/></svg><div class="val" style="left:240.4px;top:6.3px"><span class="sx" style="">Ori.App.</span></div><div class="val" style="left:282.5px;top:6.3px"><span class="sx" style="">Ori.Fab.</span></div><div class="val" style="left:325.0px;top:6.3px"><span class="sx" style="">Ori.SsT.</span></div><div class="val" style="left:369.3px;top:6.3px"><span class="sx" style="">Des.Fab.</span></div><div class="val" style="left:417.1px;top:6.3px"><span class="sx" style="">Des.SsT.</span></div><svg class="abs" style="left:465.5px;top:6.0px" width="12" height="13" viewBox="0 0 12 13"><rect x="2.6" y="1" width="6.8" height="4" fill="#8fb4ec" stroke="#b4c4dc" stroke-width=".7"/><rect x="0.8" y="4.2" width="10.4" height="5.6" rx="1" fill="#e2e2e4" stroke="#c2c2c6" stroke-width=".8"/><rect x="1.8" y="6.4" width="2.4" height=".9" fill="#e8a090"/><rect x="2.6" y="8" width="6.8" height="3.8" fill="#fff" stroke="#c4c4c4" stroke-width=".8"/></svg><div class="val" style="left:481.7px;top:6.3px"><span class="sx" style="">Des.Vte.</span></div><svg class="abs" style="left:525.7px;top:6.0px" width="12" height="13" viewBox="0 0 12 13"><path d="M0.6 4 L6 1.4 L11.4 4 V10 L6 12.6 L0.6 10 Z" fill="#cf9838" stroke="#a87420" stroke-width=".8"/><path d="M0.6 4 L6 6.6 L11.4 4 M6 6.6 V12.6" stroke="#a87420" stroke-width=".8" fill="none"/><path d="M0.6 4 L6 1.4 L11.4 4 L6 6.6 Z" fill="#e8bb62"/><path d="M0.6 4 L6 6.6 V12.6 L0.6 10 Z" fill="#dba848"/></svg>
<div class="lab" style="top:25.8px"><span class="sxr" style="">Type Article</span></div>
<div class="val" style="left:108.5px;top:25.8px"><span class="sx">R</span></div>
<div class="lab" style="top:42.4px"><span class="sxr" style="font-weight:bold;transform:scaleX(.95);">Article</span></div>
<div class="val" style="left:108.5px;top:42.4px"><span class="sx">FEN_ALU</span></div>
<div class="lab" style="top:59.2px"><span class="sxr" style="">Mot Directeur</span></div>
<div class="inp" style="left:105.7px;top:58.1px;width:175.7px"><span class="abs" style="left:0.2px;top:0.6px;height:11.4px;width:46.6px;background:#0a78d7"></span><span class="sx" style="color:#fff">Menuiserie</span><span class="sx"></span></div>
<div class="lab" style="top:75.9px"><span class="sxr" style="">Désignation</span></div>
<div class="inp" style="left:105.7px;top:74.8px;width:339.0px"><span class="sx">Fenêtre aluminum</span></div>
<div class="lab" style="top:92.2px"><span class="sxr" style="">Dés. Courte</span></div>
<div class="inp" style="left:105.7px;top:91.1px;width:175.7px"><span class="sx"></span></div>
<div class="lab" style="top:108.9px"><span class="sxr" style="">Des. Longue</span></div>
<div class="inp" style="left:105.7px;top:107.8px;width:404.0px"><span class="sx"></span></div>
<div class="inp" style="left:105.7px;top:124.2px;width:404.0px"><span class="sx"></span></div>
<div class="inp" style="left:105.7px;top:140.6px;width:404.0px"><span class="sx"></span></div>
<div class="lab" style="top:158.4px"><span class="sxr" style="">Famille</span></div>
<div class="inp" style="left:106.1px;top:157.3px;width:76.6px"><span class="sx">23</span></div>
<div class="qb" style="left:188.7px;top:157.1px">?</div>
<div class="val" style="left:207.3px;top:158.4px"><span class="sx">Menuiserie</span></div>
<div class="lab" style="top:174.9px"><span class="sxr" style="">Sous-Famille</span></div>
<div class="inp" style="left:106.1px;top:173.8px;width:76.6px"><span class="sx">ALU</span></div>
<div class="qb" style="left:188.7px;top:173.6px">?</div>
<div class="val" style="left:207.3px;top:174.9px"><span class="sx">Aluminium</span></div>
<div class="lab" style="top:191.5px"><span class="sxr" style="">Sous-sous-Fam.</span></div>
<div class="inp" style="left:106.1px;top:190.4px;width:76.6px"><span class="sx"></span></div>
<div class="qb" style="left:188.7px;top:190.2px">?</div>
<div class="lab" style="top:207.9px"><span class="sxr" style="">Statut</span></div>
<div class="inp" style="left:106.1px;top:206.8px;width:76.6px"><span class="sx"></span></div>
<div class="qb" style="left:188.7px;top:206.6px">?</div>
<div class="lab" style="top:224.6px"><span class="sxr" style="">Classe ABC</span></div>
<div class="inp" style="left:106.1px;top:223.5px;width:24.0px"><span class="sx"></span></div>
<div class="lab" style="top:241.1px"><span class="sxr" style="">Icône</span></div>
<div class="abs" style="left:106.1px;top:240.2px;width:34.5px;height:34.4px;background:#f0f0f0;border-top:1px solid #fff;border-left:1px solid #fff;border-right:1.4px solid #6d6d6d;border-bottom:1.4px solid #6d6d6d;box-shadow:inset -1px -1px 0 #a8a8a8"></div>
<div class="abs" style="left:29.9px;top:539.3px;width:247.7px;height:22.3px;background:#efee5e"></div>
<div class="lab" style="top:278.4px"><span class="sxr" style="">Ges.Art.Std.</span></div>
<div class="cb d" style="left:105.8px;top:279.2px"><svg width="7" height="7" viewBox="0 0 7 7"><path d="M0.8 3 L2.8 5 L6.4 1.2" fill="none" stroke="#8a8a8a" stroke-width="1.7"/></svg></div>
<div class="lab" style="top:294.7px"><span class="sxr" style="">Ges. à la Cde.</span></div>
<div class="cb d" style="left:105.8px;top:295.5px"></div>
<div class="lab" style="top:311.1px"><span class="sxr" style="">Art. Gamme Gen.</span></div>
<div class="cb d" style="left:105.8px;top:311.9px"></div>
<div class="lab" style="top:327.6px"><span class="sxr" style="">Type VAD</span></div>
<div class="lab" style="top:344.1px"><span class="sxr" style="">Vari-Article</span></div>
<div class="inp" style="left:106.1px;top:343.0px;width:175.3px"><span class="sx"></span></div>
<div class="qb" style="left:287.3px;top:342.8px">?</div>
<div class="lab" style="top:360.8px"><span class="sxr" style="">Lien VAD - Art</span></div>
<div class="lab" style="top:377.3px"><span class="sxr" style="">Lien V-A Figé</span></div>
<div class="cb d" style="left:105.8px;top:378.1px"></div>
<div class="lab" style="top:393.9px"><span class="sxr" style="">Approvisionne ?</span></div>
<div class="cb" style="left:105.8px;top:394.7px"></div>
<div class="lab" style="top:410.4px"><span class="sxr" style="">Fabriqué ?</span></div>
<div class="cb" style="left:105.8px;top:411.2px"><svg width="7" height="7" viewBox="0 0 7 7"><path d="M0.8 3 L2.8 5 L6.4 1.2" fill="none" stroke="#000" stroke-width="1.7"/></svg></div>
<div class="lab" style="top:426.9px"><span class="sxr" style="">Sous-Traité</span></div>
<div class="cb" style="left:105.8px;top:427.7px"></div>
<div class="lab" style="top:443.5px"><span class="sxr" style="">Origine Prin.</span></div>
<div class="inp" style="left:106.1px;top:442.4px;width:24.0px"><span class="sx">F</span></div>
<div class="qb" style="left:137.1px;top:442.2px">?</div>
<div class="val" style="left:155.7px;top:443.5px"><span class="sx">Origine Fabrique</span></div>
<div class="lab" style="top:460.1px"><span class="sxr" style="">Gestion Achats</span></div>
<div class="cb d" style="left:105.8px;top:460.9px"></div>
<div class="lab" style="top:476.7px"><span class="sxr" style="">Des.Fab. ?</span></div>
<div class="cb" style="left:105.8px;top:477.5px"></div>
<div class="lab" style="top:493.2px"><span class="sxr" style="">Des.Vente ?</span></div>
<div class="cb" style="left:105.8px;top:494.0px"><svg width="7" height="7" viewBox="0 0 7 7"><path d="M0.8 3 L2.8 5 L6.4 1.2" fill="none" stroke="#000" stroke-width="1.7"/></svg></div>
<div class="lab" style="top:509.7px"><span class="sxr" style="">Des.SsT. ?</span></div>
<div class="cb" style="left:105.8px;top:510.5px"></div>
<div class="lab" style="top:526.2px"><span class="sxr" style="">Gestion Stock ?</span></div>
<div class="cb" style="left:105.8px;top:527.0px"><svg width="7" height="7" viewBox="0 0 7 7"><path d="M0.8 3 L2.8 5 L6.4 1.2" fill="none" stroke="#000" stroke-width="1.7"/></svg></div>
<div class="lab" style="top:542.9px"><span class="sxr" style="">Scé.Déf.Art.</span></div>
<div class="inp" style="left:106.3px;top:541.8px;width:141.7px;background:#ffff66;border-right-color:#eeec5c;border-bottom-color:#eeec5c"></div>
<div class="qb" style="left:254.0px;top:541.4px;background:#efee5e;border-top-color:#ffff66;border-left-color:#ffff66">?</div>
<div class="lab" style="top:559.7px"><span class="sxr" style="">Lien App.Ext. ?</span></div>
<div class="cb d" style="left:105.8px;top:560.5px"></div>
<div class="lab" style="top:576.2px"><span class="sxr" style="">Réf.App.Ext.</span></div>
<div class="qb" style="left:188.7px;top:574.9px">?</div>
<div class="lab" style="top:592.6px"><span class="sxr" style="">Réf.Externe</span></div>
<svg class="abs" style="left:110.9px;top:541.6px" width="19" height="32" viewBox="0 0 19 32"><defs><clipPath id="cy"><rect x="-2" y="-2" width="30" height="22"/></clipPath></defs><path id="cp" d="M0.9 1.2 L0.9 23.4 L5.6 18.8 L10 28.8 L13.4 27.4 L9.4 17.8 L16 17.8 Z" fill="#fff" stroke="#000" stroke-width="1.7" stroke-linejoin="miter"/><path d="M0.9 1.2 L0.9 23.4 L5.6 18.8 L10 28.8 L13.4 27.4 L9.4 17.8 L16 17.8 Z" fill="#ffff66" stroke="#000" stroke-width="1.7" clip-path="url(#cy)"/></svg>
</div>
</body></html>
